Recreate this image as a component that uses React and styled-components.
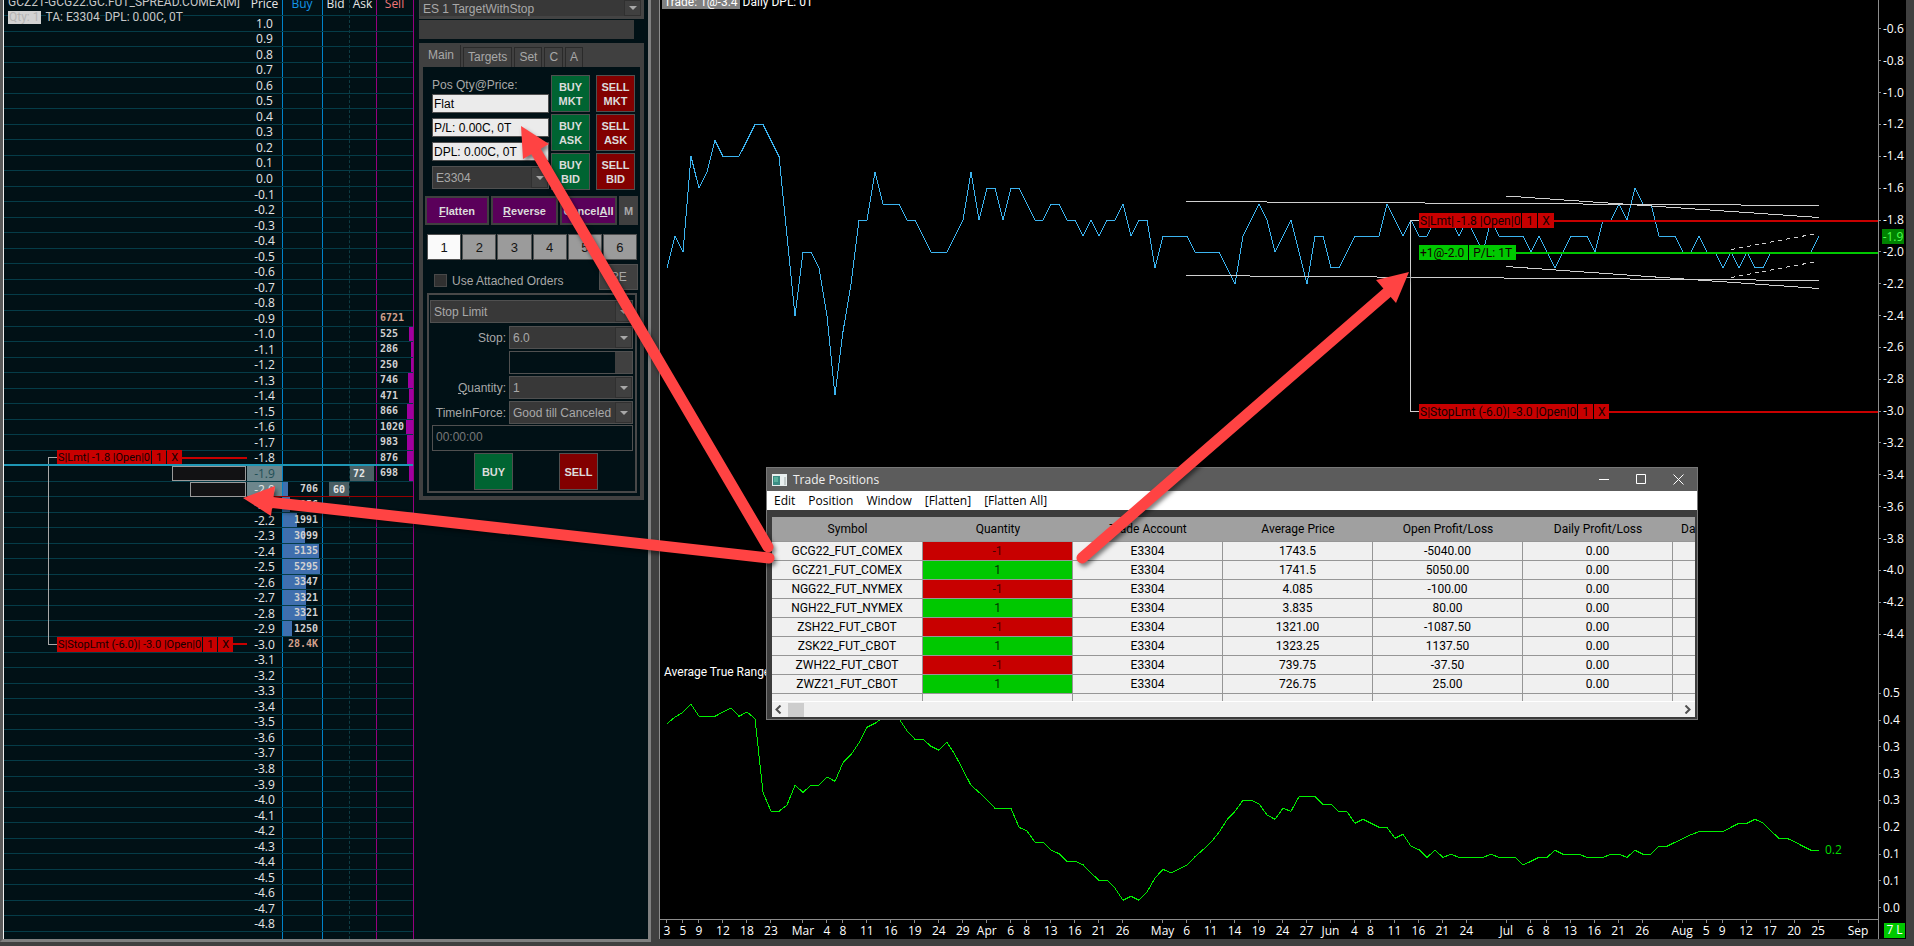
import { useState } from "react";
import styled, { createGlobalStyle, css } from "styled-components";

const GlobalStyle = createGlobalStyle`
  * {
    box-sizing: border-box;
  }
  body {
    margin: 0;
    background: #404040;
    overflow: hidden;
  }
  button, input, select {
    margin: 0;
    border-radius: 0;
    font-family: inherit;
  }
`;

const uiFont = `"Segoe UI", "Open Sans", "Noto Sans", sans-serif`;
const tightFont = `"Segoe UI", Roboto, "Liberation Sans", sans-serif`;
const formFont = `Arial, "Liberation Sans", sans-serif`;
const monoFont = `Consolas, "DejaVu Sans Mono", monospace`;

/* ---------- data ---------- */

const bidDepth = {
  "-2.0": ["706", 5],
  "-2.1": ["956", 7],
  "-2.2": ["1991", 14],
  "-2.3": ["3099", 22],
  "-2.4": ["5135", 36],
  "-2.5": ["5295", 37],
  "-2.6": ["3347", 23],
  "-2.7": ["3321", 23],
  "-2.8": ["3321", 23],
  "-2.9": ["1250", 9],
  "-3.0": ["28.4K", 0],
};

const askDepth = {
  "-0.9": ["6721", 0],
  "-1.0": ["525", 4],
  "-1.1": ["286", 2],
  "-1.2": ["250", 2],
  "-1.3": ["746", 5],
  "-1.4": ["471", 4],
  "-1.5": ["866", 6],
  "-1.6": ["1020", 7],
  "-1.7": ["983", 6],
  "-1.8": ["876", 6],
  "-1.9": ["698", 4],
};

const ladderOrders = {
  "-1.8": "S|Lmt| -1.8 |Open|0",
  "-3.0": "S|StopLmt (-6.0)| -3.0 |Open|0",
};

// from 1.0 down to -4.8
const prices = Array.from({ length: 59 }, (_, i) => ((10 - i) / 10).toFixed(1));

const positions = [
  ["GCG22_FUT_COMEX", "-1", "E3304", "1743.5", "-5040.00", "0.00"],
  ["GCZ21_FUT_COMEX", "1", "E3304", "1741.5", "5050.00", "0.00"],
  ["NGG22_FUT_NYMEX", "-1", "E3304", "4.085", "-100.00", "0.00"],
  ["NGH22_FUT_NYMEX", "1", "E3304", "3.835", "80.00", "0.00"],
  ["ZSH22_FUT_CBOT", "-1", "E3304", "1321.00", "-1087.50", "0.00"],
  ["ZSK22_FUT_CBOT", "1", "E3304", "1323.25", "1137.50", "0.00"],
  ["ZWH22_FUT_CBOT", "-1", "E3304", "739.75", "-37.50", "0.00"],
  ["ZWZ21_FUT_CBOT", "1", "E3304", "726.75", "25.00", "0.00"],
];

// spread closes in negative tenths, one per bar
const closes = [
  21, 19, 20, 14, 16, 15, 13, 14, 14, 14, 13, 12, 12, 13, 14, 19, 24, 20, 20, 21,
  24, 29, 25, 22, 18, 18, 15, 17, 17, 17, 18, 18, 19, 20, 20, 20, 19, 18, 15, 18,
  16, 16, 18, 16, 16, 17, 18, 18, 17, 17, 18, 18, 19, 18, 19, 18, 18, 17, 19, 18,
  18, 21, 19, 19, 19, 19, 20, 20, 20, 20, 21, 22, 19, 18, 17, 18, 20, 19, 18, 20,
  22, 19, 19, 21, 21, 20, 19, 19, 19, 19, 17, 18, 19, 18, 19, 19, 18, 18, 18, 19,
  18, 19, 20, 18, 19, 19, 19, 19, 20, 19, 20, 21, 20, 19, 19, 19, 20, 18, 18, 17,
  18, 16, 17, 17, 19, 19, 19, 20, 20, 19, 20, 20, 21, 20, 21, 20, 21, 21, 20, 20,
  20, 20, 20, 20, 19,
];

const atr = [
  251, 231, 217, 193, 229, 229, 229, 216, 204, 229, 216, 236, 457, 514, 514, 495,
  436, 457, 436, 436, 411, 424, 368, 344, 308, 262, 250, 232, 225, 236, 272, 298,
  298, 319, 331, 307, 344, 390, 436, 457, 480, 505, 505, 505, 562, 573, 607, 607,
  630, 641, 664, 664, 674, 699, 721, 721, 745, 781, 769, 781, 756, 714, 688, 699,
  687, 675, 650, 629, 607, 577, 539, 514, 481, 481, 491, 525, 538, 505, 514, 470,
  470, 470, 493, 493, 515, 515, 550, 538, 550, 562, 562, 595, 583, 619, 629, 652,
  631, 652, 643, 652, 652, 652, 652, 643, 652, 652, 652, 675, 664, 652, 652, 631,
  643, 643, 643, 652, 652, 652, 643, 643, 652, 631, 643, 643, 619, 619, 607, 596,
  584, 575, 575, 575, 575, 562, 550, 550, 538, 549, 573, 595, 595, 606, 619, 631,
  631,
];

const dates = [
  [0, "3"], [2, "5"], [4, "9"], [7, "12"], [10, "18"], [13, "23"], [17, "Mar"],
  [20, "4"], [22, "8"], [25, "11"], [28, "16"], [31, "19"], [34, "24"], [37, "29"],
  [40, "Apr"], [43, "6"], [45, "8"], [48, "13"], [51, "16"], [54, "21"], [57, "26"],
  [62, "May"], [65, "6"], [68, "11"], [71, "14"], [74, "19"], [77, "24"], [80, "27"],
  [83, "Jun"], [86, "4"], [88, "8"], [91, "11"], [94, "16"], [97, "21"], [100, "24"],
  [105, "Jul"], [108, "6"], [110, "8"], [113, "13"], [116, "16"], [119, "21"],
  [122, "26"], [127, "Aug"], [130, "5"], [132, "9"], [135, "12"], [138, "17"],
  [141, "20"], [144, "25"], [149, "Sep"],
];

const priceScale = Array.from({ length: 20 }, (_, i) => (-0.6 - i * 0.2).toFixed(1));
const atrScale = ["0.5", "0.4", "0.3", "0.3", "0.3", "0.2", "0.1", "0.1", "0.0"];

const closePoints = closes.map((c, i) => `${7 + i * 8},${(252 + (c - 20) * 15.93).toFixed(1)}`).join(" ");
const atrPoints = atr.map((v, i) => `${7 + i * 8},${(640 + v / 3).toFixed(1)}`).join(" ");

/* ---------- small parts ---------- */

function OrderTag({ text, position, small }) {
  const parts = position ? text : [text, "1", "X"];
  return (
    <Tag $position={position} $small={small}>
      {parts.map((part, i) => (
        <TagPart key={i}>{part}</TagPart>
      ))}
    </Tag>
  );
}

function Combo({ id, label, value, ...rest }) {
  return (
    <ComboBox {...rest}>
      <ComboSelect id={id} aria-label={label} defaultValue={value}>
        <option>{value}</option>
      </ComboSelect>
      <ComboArrow>
        <svg width="8" height="4" viewBox="0 0 8 4">
          <path d="M0 0h8L4 4z" fill="#a8a8a8" />
        </svg>
      </ComboArrow>
    </ComboBox>
  );
}

/* ---------- price ladder ---------- */

function LadderRow({ price }) {
  const buy = bidDepth[price];
  const sell = askDepth[price];
  const order = ladderOrders[price];
  return (
    <LadderLine>
      <OrderCell>
        {order && (
          <>
            <OrderTag small text={order} />
            <OrderRule />
          </>
        )}
        {price === "-1.9" && <LastTradeBox $wide />}
        {price === "-2.0" && <LastTradeBox />}
      </OrderCell>
      <PriceCell $mark={price === "-1.9" ? "last" : price === "-2.0" ? "bid" : ""}>{price}</PriceCell>
      <BuyCell>
        {buy && buy[1] > 0 && <BuyBar style={{ width: buy[1] }} />}
        {buy && <DepthText $total={price === "-3.0"}>{buy[0]}</DepthText>}
      </BuyCell>
      <BidCell>{price === "-2.0" && <BestBid>60</BestBid>}</BidCell>
      <AskCell>{price === "-1.9" && <BestAsk>72</BestAsk>}</AskCell>
      <SellCell>
        {sell && <DepthText $total={price === "-0.9"}>{sell[0]}</DepthText>}
        {sell && sell[1] > 0 && <SellBar style={{ width: sell[1] }} />}
      </SellCell>
    </LadderLine>
  );
}

function Ladder() {
  return (
    <LadderPane>
      <ColumnLines>
        <i />
        <i />
        <BlueLine />
        <BlueLine />
        <DashLine />
        <SellLine />
      </ColumnLines>
      <LadderBody>
        <LadderHead>
          <span />
          <span>Price</span>
          <HeadBuy>Buy</HeadBuy>
          <span>Bid</span>
          <span>Ask</span>
          <HeadSell>Sell</HeadSell>
        </LadderHead>
        <LadderRows>
          {prices.map((price) => (
            <LadderRow key={price} price={price} />
          ))}
        </LadderRows>
      </LadderBody>
      <LadderTitle>
        <div>GCZ21-GCG22.GC.FUT_SPREAD.COMEX[M]</div>
        <LadderInfo>
          <QtyBox>Qty: 1</QtyBox>
          <span>TA: E3304</span>
          <span>DPL: 0.00C, 0T</span>
        </LadderInfo>
      </LadderTitle>
      <LadderBracket />
      <SpreadLine />
      <BidLine />
    </LadderPane>
  );
}

/* ---------- trade panel ---------- */

function TradePanel() {
  const [qty, setQty] = useState(1);
  const [tab, setTab] = useState("Main");
  return (
    <Panel>
      <ConfigCombo label="Trade configuration" value="ES 1 TargetWithStop" />
      <StatusBox />
      <TabFrame>
        <TabStrip>
          {["Main", "Targets", "Set", "C", "A"].map((name) => (
            <TabButton key={name} $active={name === tab} onClick={() => setTab(name)}>
              {name}
            </TabButton>
          ))}
        </TabStrip>
        <TabBody>
          <TopBlock>
            <Fields>
              <FieldLabel htmlFor="pos">Pos Qty@Price:</FieldLabel>
              <ReadField id="pos" readOnly value="Flat" />
              <ReadField aria-label="Open profit/loss" readOnly value="P/L: 0.00C, 0T" />
              <ReadField aria-label="Daily profit/loss" readOnly value="DPL: 0.00C, 0T" />
              <Combo label="Account" value="E3304" />
            </Fields>
            <OrderButtons>
              {["MKT", "ASK", "BID"].map((kind) => (
                <TradeButton key={kind}>BUY<br />{kind}</TradeButton>
              ))}
            </OrderButtons>
            <OrderButtons>
              {["MKT", "ASK", "BID"].map((kind) => (
                <TradeButton key={kind} $sell>SELL<br />{kind}</TradeButton>
              ))}
            </OrderButtons>
          </TopBlock>
          <ActionRow>
            <PurpleButton><u>F</u>latten</PurpleButton>
            <PurpleButton><u>R</u>everse</PurpleButton>
            <PurpleButton>Cancel<u>A</u>ll</PurpleButton>
            <GreyButton>M</GreyButton>
          </ActionRow>
          <QtyRow>
            {[1, 2, 3, 4, 5, 6].map((n) => (
              <QtyButton key={n} $active={n === qty} onClick={() => setQty(n)}>{n}</QtyButton>
            ))}
          </QtyRow>
          <AttachRow>
            <CheckBox type="checkbox" id="attached" />
            <AttachLabel htmlFor="attached">Use Attached Orders</AttachLabel>
            <ReButton>RE</ReButton>
          </AttachRow>
          <OrderGroup>
            <Combo label="Order type" value="Stop Limit" />
            <OrderForm>
              <label htmlFor="stop">Stop:</label>
              <Combo id="stop" value="6.0" />
              <span />
              <OffsetBox><OffsetThumb /></OffsetBox>
              <label htmlFor="quantity"><u>Q</u>uantity:</label>
              <Combo id="quantity" value="1" />
              <label htmlFor="tif">TimeInForce:</label>
              <Combo id="tif" value="Good till Canceled" />
            </OrderForm>
            <TimeInput aria-label="Time" defaultValue="00:00:00" />
            <SubmitRow>
              <TradeButton>BUY</TradeButton>
              <TradeButton $sell>SELL</TradeButton>
            </SubmitRow>
          </OrderGroup>
        </TabBody>
      </TabFrame>
    </Panel>
  );
}

/* ---------- chart ---------- */

function Chart() {
  return (
    <ChartWindow>
      <PlotColumn>
        <Plot viewBox="0 0 1218 919" preserveAspectRatio="none">
          <polyline points={closePoints} stroke="#3cb4f0" />
          <polyline points={atrPoints} stroke="#00f000" />
          <g stroke="#d0d0d0">
            <path d="M526 201.5L1159 205.5M846 196L1159 217.5M526 275.5L1159 280.5M846 266.5L1159 288.5" />
            <path d="M1071 249.5L1157 233.5M1071 277.5L1157 261.5" strokeDasharray="4 4" />
            <path d="M759 220.5H750.5V411.5H759" />
          </g>
        </Plot>
        <DateAxis>
          {dates.map(([bar, text]) => (
            <DateLabel key={bar} style={{ gridColumn: bar + 1 }}>{text}</DateLabel>
          ))}
        </DateAxis>
      </PlotColumn>
      <ValueAxis>
        <Scale $grow={637}>
          {priceScale.map((v) => <ScaleLabel key={v}>{v}</ScaleLabel>)}
        </Scale>
        <AxisGap />
        <Scale $grow={241}>
          {atrScale.map((v, i) => <ScaleLabel key={i}>{v}</ScaleLabel>)}
        </Scale>
        <BarsBadge>7 L</BarsBadge>
        <LastBadge>-1.9</LastBadge>
      </ValueAxis>

      <ChartTitle>
        <span>Trade: 1@-3.4</span> Daily DPL: 0T
      </ChartTitle>
      <StudyName>Average True Range</StudyName>
      <AtrValue>0.2</AtrValue>
      <ChartOrder $top={213}>
        <OrderTag text="S|Lmt| -1.8 |Open|0" />
        <OrderRule />
      </ChartOrder>
      <ChartOrder $top={245}>
        <OrderTag position text={["+1@-2.0 ", "P/L: 1T"]} />
        <OrderRule $position />
      </ChartOrder>
      <ChartOrder $top={404}>
        <OrderTag text="S|StopLmt (-6.0)| -3.0 |Open|0" />
        <OrderRule />
      </ChartOrder>
    </ChartWindow>
  );
}

/* ---------- trade positions window ---------- */

function PositionsWindow() {
  return (
    <PosWindow>
      <TitleBar>
        <svg width="15" height="12" viewBox="0 0 15 12">
          <rect width="15" height="12" fill="#e8eeee" />
          <rect x="1" y="2" width="7" height="9" fill="#3c8c84" />
          <rect x="2" y="3" width="4" height="5" fill="#5ab09c" />
          <rect x="12" y="3" width="2" height="8" fill="#c4cccc" />
        </svg>
        <TitleText>Trade Positions</TitleText>
        <WindowButton aria-label="Minimize">
          <svg width="11" height="11" viewBox="0 0 11 11"><path d="M0 5.5h10" /></svg>
        </WindowButton>
        <WindowButton aria-label="Maximize">
          <svg width="11" height="11" viewBox="0 0 11 11"><path d="M.5 .5h9v9h-9z" /></svg>
        </WindowButton>
        <WindowButton aria-label="Close">
          <svg width="11" height="11" viewBox="0 0 11 11"><path d="M.5 .5l10 10M10.5 .5l-10 10" /></svg>
        </WindowButton>
      </TitleBar>
      <MenuBar>
        {["Edit", "Position", "Window", "[Flatten]", "[Flatten All]"].map((item) => (
          <MenuItem key={item}>{item}</MenuItem>
        ))}
      </MenuBar>
      <GridFrame>
        <PosTable>
          <thead>
            <tr>
              <th>Symbol</th>
              <th>Quantity</th>
              <th>Trade Account</th>
              <th>Average Price</th>
              <th>Open Profit/Loss</th>
              <th>Daily Profit/Loss</th>
              <LastHead>Da</LastHead>
            </tr>
          </thead>
          <tbody>
            {positions.map((row) => (
              <tr key={row[0]}>
                {row.map((cell, i) =>
                  i === 1 ? (
                    <QtyCell key={i} $short={cell === "-1"}>{cell}</QtyCell>
                  ) : (
                    <td key={i}>{cell}</td>
                  )
                )}
                <td />
              </tr>
            ))}
            <StubRow>
              <td /><td /><td /><td /><td /><td /><td />
            </StubRow>
          </tbody>
        </PosTable>
        <ScrollBar>
          <svg width="7" height="9" viewBox="0 0 7 9"><path d="M5.5 .5l-4 4 4 4" /></svg>
          <ScrollThumb />
          <svg width="7" height="9" viewBox="0 0 7 9"><path d="M1.5 .5l4 4-4 4" /></svg>
        </ScrollBar>
      </GridFrame>
    </PosWindow>
  );
}

function Arrows() {
  return (
    <ArrowLayer viewBox="0 0 1914 946" preserveAspectRatio="none">
      <g stroke="#ff4343" strokeWidth="11" strokeLinecap="round">
        <path d="M768 547L534 148" />
        <path d="M769 558L268 502" />
        <path d="M1082 558L1389 291" />
      </g>
      <g fill="#ff4343">
        <path d="M521 126L549 144L523 159z" />
        <path d="M243 498L275 486L271 516z" />
        <path d="M1409 272L1396 303L1376 280z" />
      </g>
    </ArrowLayer>
  );
}

export default function App() {
  return (
    <Desktop>
      <GlobalStyle />
      <DomWindow>
        <Ladder />
        <TradePanel />
      </DomWindow>
      <Chart />
      <PositionsWindow />
      <Arrows />
    </Desktop>
  );
}

/* ---------- styles ---------- */

const Desktop = styled.main`
  position: relative;
  display: flex;
  gap: 8px;
  height: 100vh;
  padding: 0 8px 0 0;
  background: #404040;
  font: 12px/14px ${uiFont};
  color: #e6e6e6;
  overflow: hidden;
`;

const DomWindow = styled.section`
  display: flex;
  flex: none;
  margin-bottom: 4px;
  border: 3px solid #808080;
  border-top: 0;
  border-left-color: #5a5a5a;
  background: #011116;
  overflow: hidden;
`;

const ladderColumns = css`
  display: grid;
  grid-template-columns: 243px 35px 40px 27px 27px 37px;
`;

const LadderPane = styled.div`
  position: relative;
  display: grid;
  width: 411px;
  border-left: 1px solid #f0f0f0;
  border-right: 1px solid #96007f;
`;

const ColumnLines = styled.div`
  ${ladderColumns}
  grid-area: 1 / 1;
`;
const BlueLine = styled.i`
  border-left: 1px solid #0082c8;
`;
const DashLine = styled.i`
  border-left: 1px dashed #0f3c44;
`;
const SellLine = styled.i`
  border-left: 1px solid #96007f;
`;

const LadderBody = styled.div`
  grid-area: 1 / 1;
  display: flex;
  flex-direction: column;
  padding-bottom: 7px;
  min-height: 0;
`;

const LadderHead = styled.div`
  ${ladderColumns}
  height: 16px;
  border-bottom: 1px solid #053c48;
  line-height: 8px;
  text-align: center;
`;
const HeadBuy = styled.span`
  color: #1496e6;
`;
const HeadSell = styled.span`
  color: #f07878;
`;

const LadderRows = styled.div`
  flex: 1;
  display: grid;
  grid-auto-rows: 1fr;
  min-height: 0;
`;

const LadderLine = styled.div`
  ${ladderColumns}
  min-height: 0;
  border-bottom: 1px solid #053c48;
`;

const cell = css`
  display: flex;
  align-items: center;
  min-width: 0;
  min-height: 0;
`;

const OrderCell = styled.div`
  ${cell}
  padding-left: 53px;
`;

const PriceCell = styled.div`
  ${cell}
  justify-content: center;
  padding-top: 1px;
  ${(p) => p.$mark && css`background: #6d868c;`}
  color: ${(p) => (p.$mark === "last" ? "#1f4f56" : "#e6e6e6")};
`;

const BuyCell = styled.div`
  ${cell}
  position: relative;
  justify-content: flex-end;
  padding: 0 4px 0 1px;
`;
const BuyBar = styled.div`
  position: absolute;
  left: 1px;
  top: 0;
  bottom: 0;
  background: #3f6fae;
`;
const BidCell = styled.div`
  ${cell}
  justify-content: flex-end;
`;
const AskCell = styled.div`
  ${cell}
  padding-left: 1px;
`;
const SellCell = styled.div`
  ${cell}
  align-items: stretch;
  justify-content: space-between;
  padding-left: 4px;
`;
const SellBar = styled.div`
  background: #a000a0;
`;

const DepthText = styled.span`
  position: relative;
  font: bold 10px/14px ${monoFont};
  color: ${(p) => (p.$total ? "#d2a08c" : "#d2d2d2")};
`;

const BestBid = styled.span`
  width: 20px;
  background: #4b5f64;
  font: bold 10px/15px ${monoFont};
  text-align: center;
`;
const BestAsk = styled(BestBid)`
  width: 24px;
  padding-left: 3px;
  text-align: left;
`;

const LastTradeBox = styled.div`
  width: ${(p) => (p.$wide ? 74 : 56)}px;
  height: 15px;
  margin: 0 1px 0 auto;
  border: 1px solid #9a9a9a;
  background: #121214;
`;

const LadderTitle = styled.div`
  position: absolute;
  left: 4px;
  top: -5px;
  color: #c8c8c8;
  font-family: ${tightFont};
`;
const LadderInfo = styled.div`
  display: flex;
  align-items: center;
  gap: 5px;
  margin-top: 1px;

  span {
    background: #011116;
  }
`;
const QtyBox = styled.div`
  padding: 0 1px;
  background: #d2d2d2;
  line-height: 13px;
  color: #b4b4b4;
`;

const LadderBracket = styled.div`
  position: absolute;
  left: 44px;
  top: 457px;
  width: 9px;
  height: 188px;
  border: 1px solid #a8a8a8;
  border-right: 0;
`;
const SpreadLine = styled.div`
  position: absolute;
  left: 0;
  right: 0;
  top: 464px;
  height: 2px;
  background: #1e96b4;
`;
const BidLine = styled.div`
  position: absolute;
  left: 243px;
  right: 0;
  top: 496px;
  height: 1px;
  background: #960000;
`;

const TagPart = styled.span`
  padding: 1px 1px 0;
  line-height: 14px;

  & + & {
    padding: 1px 4px 0;
  }
`;
const Tag = styled.div`
  display: flex;
  flex: none;
  gap: 1px;
  font-family: ${tightFont};
  font-size: ${(p) => (p.$small ? 11 : 12)}px;
  color: #140000;
  white-space: pre;

  > span {
    background: ${(p) => (p.$position ? "#00c800" : "#c80000")};
  }
`;
const OrderRule = styled.div`
  flex: 1;
  height: 2px;
  background: ${(p) => (p.$position ? "#00c800" : "#c80000")};
`;

const Panel = styled.div`
  width: 225px;
  margin: 0 4px 0 5px;
  font: 12px/14px ${formFont};
  color: #a8a8a8;
`;

const ComboBox = styled.div`
  display: flex;
  align-items: stretch;
  height: 23px;
  border: 1px solid #505050;
  background: #383838;
`;
const ComboSelect = styled.select`
  flex: 1;
  min-width: 0;
  padding: 1px 0 0 3px;
  appearance: none;
  border: 0;
  background: transparent;
  font-size: 12px;
  color: #a8a8a8;
  outline: 0;
`;
const ComboArrow = styled.span`
  display: flex;
  flex: none;
  align-items: center;
  justify-content: center;
  width: 17px;
  border: 1px solid #303030;
  background: #404040;
`;

const ConfigCombo = styled(Combo)`
  height: 19px;
  border-top: 0;
  border-width: 0 3px 3px 1px;
  border-color: #444;
`;

const StatusBox = styled.div`
  width: 215px;
  height: 19px;
  margin-top: 1px;
  background: #3c3c3c;
`;

const TabFrame = styled.div`
  margin-top: 4px;
  padding: 1px 4px 4px;
  background: #404040;
`;
const TabStrip = styled.div`
  display: flex;
  align-items: flex-end;
  gap: 2px;
  height: 23px;
`;
const TabButton = styled.button`
  height: ${(p) => (p.$active ? 22 : 20)}px;
  padding: ${(p) => (p.$active ? "0 6px 2px 5px" : "0 4px 2px")};
  border: 1px solid #2a2a2a;
  border-width: ${(p) => (p.$active ? "0 1px 0 0" : "1px 1px 0")};
  background: #404040;
  font-size: 12px;
  color: #a8a8a8;
`;
const TabBody = styled.div`
  padding: 8px 2px 3px;
  background: #011116;
`;

const TopBlock = styled.div`
  display: flex;
  padding-left: 7px;
`;
const Fields = styled.div`
  display: flex;
  flex-direction: column;
  gap: 5px;
  width: 117px;
`;
const FieldLabel = styled.label`
  height: 19px;
  margin-bottom: -5px;
  line-height: 20px;
`;
const ReadField = styled.input`
  width: 100%;
  height: 19px;
  padding: 1px 0 0 1px;
  border: 1px solid #505050;
  background: #ebebeb;
  font-size: 12px;
  color: #000;
`;
const OrderButtons = styled.div`
  display: flex;
  flex-direction: column;
  gap: 2px;
  margin-left: 2px;

  & + & {
    margin-left: 6px;
  }
`;

const TradeButton = styled.button`
  width: 39px;
  height: 37px;
  padding: 0;
  border: 1px solid #505050;
  background: ${(p) => (p.$sell ? "#820000" : "#006432")};
  font-size: 11px;
  font-weight: bold;
  line-height: 14px;
  color: #dcdcdc;
`;

const ActionRow = styled.div`
  display: grid;
  grid-template-columns: 64fr 67fr 57fr 19fr;
  gap: 2px;
  margin-top: 6px;
`;
const PurpleButton = styled.button`
  min-width: 0;
  height: 29px;
  padding: 0;
  border: 2px solid #404040;
  background: #5a005a;
  font-size: 11px;
  font-weight: bold;
  color: #dcdcdc;
`;
const GreyButton = styled(PurpleButton)`
  background: #404040;
  color: #a8a8a8;
`;

const QtyRow = styled.div`
  display: grid;
  grid-template-columns: repeat(6, 1fr);
  gap: 1px;
  margin: 9px 1px 0 2px;
`;
const QtyButton = styled.button`
  height: 26px;
  padding: 0;
  border: 1px solid #505050;
  background: ${(p) => (p.$active ? "#fafafa" : "#9b9b9b")};
  font-size: 13px;
  color: #141414;
`;

const AttachRow = styled.div`
  display: flex;
  align-items: center;
  gap: 5px;
  height: 26px;
  margin: 4px 0 3px;
  padding-left: 9px;
`;
const CheckBox = styled.input`
  && {
    width: 13px;
    height: 13px;
    margin-top: 7px;
    appearance: none;
    border: 1px solid #484848;
    background: #303030;
  }
`;
const AttachLabel = styled.label`
  flex: 1;
  padding-top: 8px;
  line-height: 14px;
`;
const ReButton = styled.button`
  width: 39px;
  height: 26px;
  padding: 0;
  border: 1px solid #505050;
  background: #404040;
  font-size: 12px;
  color: #a8a8a8;
`;

const OrderGroup = styled.div`
  margin: 0 1px 0 2px;
  padding: 5px 2px 1px 1px;
  border: 2px solid #484848;
`;
const OrderForm = styled.div`
  display: grid;
  grid-template-columns: 1fr 124px;
  align-items: center;
  gap: 2px 3px;
  margin: 3px 0 1px;
  text-align: right;
`;
const OffsetBox = styled.div`
  display: flex;
  justify-content: flex-end;
  height: 23px;
  border: 1px solid #505050;
  background: #011116;
`;
const OffsetThumb = styled.div`
  width: 17px;
  background: #404040;
`;
const TimeInput = styled.input`
  display: block;
  width: 201px;
  height: 26px;
  margin-left: auto;
  padding: 0 3px 3px;
  border: 1px solid #505050;
  background: #011116;
  font-size: 12px;
  color: #787878;
`;
const SubmitRow = styled.div`
  display: flex;
  justify-content: space-between;
  margin: 2px 35px 0 44px;
`;

const ChartWindow = styled.section`
  position: relative;
  display: flex;
  flex: 1;
  min-width: 0;
  margin-bottom: 7px;
  border-left: 1px solid #8c8c8c;
  background: #000;
  color: #fff;
  overflow: hidden;
`;
const PlotColumn = styled.div`
  flex: 1;
  display: flex;
  flex-direction: column;
  min-width: 0;
`;
const Plot = styled.svg`
  flex: 1;
  width: 100%;
  min-height: 0;
  fill: none;
  shape-rendering: crispEdges;
`;
const DateAxis = styled.div`
  display: grid;
  grid-template-columns: repeat(152, 1fr);
  height: 20px;
  padding-left: 3px;
  border-top: 1px solid #8c8c8c;
`;
const DateLabel = styled.span`
  display: flex;
  flex-direction: column;
  align-items: center;
  min-width: 0;
  line-height: 16px;

  &::before {
    content: "";
    flex: none;
    width: 1px;
    height: 3px;
    background: #8c8c8c;
  }
`;
const ValueAxis = styled.div`
  position: relative;
  display: flex;
  flex-direction: column;
  width: 28px;
  padding-top: 13px;
  border-left: 1px solid #8c8c8c;
`;
const Scale = styled.div`
  flex: ${(p) => p.$grow} 1 0;
  display: grid;
  grid-auto-rows: 1fr;
`;
const AxisGap = styled.div`
  flex: 30 1 0;
`;
const ScaleLabel = styled.span`
  display: flex;
  align-items: center;
  gap: 2px;

  &::before {
    content: "";
    width: 2px;
    height: 1px;
    background: #8c8c8c;
  }
`;
const BarsBadge = styled.span`
  width: 21px;
  height: 15px;
  margin: 2px 0 1px 5px;
  background: #00c800;
  text-align: center;
`;
const LastBadge = styled.span`
  position: absolute;
  left: 3px;
  top: 229px;
  width: 22px;
  background: #008200;
  line-height: 15px;
  text-align: center;
  color: #50ff50;
`;

const ChartTitle = styled.div`
  position: absolute;
  left: 2px;
  top: -5px;
  font-family: ${tightFont};

  span {
    padding: 0 2px;
    background: #808080;
  }
`;
const StudyName = styled.div`
  position: absolute;
  left: 4px;
  top: 665px;
  font-family: ${tightFont};
`;
const AtrValue = styled.div`
  position: absolute;
  left: 1165px;
  top: 843px;
  color: #00dc00;
`;
const ChartOrder = styled.div`
  position: absolute;
  left: 759px;
  right: 28px;
  top: ${(p) => p.$top}px;
  display: flex;
  align-items: center;
`;

const PosWindow = styled.section`
  position: absolute;
  left: 766px;
  top: 467px;
  width: 932px;
  border: 1px solid #787878;
  background: #3c3c3c;
  color: #000;
`;
const TitleBar = styled.header`
  display: flex;
  align-items: center;
  height: 23px;
  padding-left: 5px;
  background: #5c5c5c;
`;
const TitleText = styled.h1`
  flex: 1;
  margin: 0 0 0 6px;
  font: inherit;
  color: #f0f0f0;
`;
const WindowButton = styled.button`
  display: flex;
  align-items: center;
  justify-content: center;
  width: 37px;
  height: 22px;
  padding: 0;
  border: 0;
  background: none;

  svg {
    fill: none;
    stroke: #fff;
  }
`;
const MenuBar = styled.nav`
  display: flex;
  gap: 13px;
  height: 19px;
  padding-left: 7px;
  background: #fff;
`;
const MenuItem = styled.button`
  padding: 0;
  border: 0;
  background: none;
  font-size: 12px;
  line-height: 18px;
  color: #000;
`;

const GridFrame = styled.div`
  margin: 7px 2px 2px 5px;
  background: #f0f0f0;
`;
const PosTable = styled.table`
  width: 100%;
  table-layout: fixed;
  border-collapse: separate;
  border-spacing: 0;
  font-family: ${tightFont};
  text-align: center;

  th {
    width: 150px;
    height: 25px;
    padding: 0;
    border-bottom: 1px solid #969696;
    background: #a0a0a0;
    font-weight: normal;
  }
  th:first-child {
    width: 151px;
  }
  td {
    height: 19px;
    padding: 0 0 1px;
    border-right: 1px solid #969696;
    border-bottom: 1px solid #969696;
    line-height: 14px;
  }
  td:last-child {
    border-right: 0;
  }
`;
const LastHead = styled.th`
  && {
    width: auto;
    padding-left: 8px;
    text-align: left;
  }
`;
const QtyCell = styled.td`
  background: ${(p) => (p.$short ? "#c80000" : "#00c800")};
  color: ${(p) => (p.$short ? "#460000" : "#003200")};
`;
const StubRow = styled.tr`
  && td {
    height: 7px;
    padding: 0;
    border-bottom: 0;
    line-height: 0;
  }
`;
const ScrollBar = styled.div`
  display: flex;
  align-items: center;
  gap: 6px;
  height: 16px;
  padding: 0 4px 0 3px;
  border-top: 1px solid #fff;

  svg {
    fill: none;
    stroke: #505050;
    stroke-width: 2;
  }
`;
const ScrollThumb = styled.div`
  width: 16px;
  height: 14px;
  margin-right: auto;
  background: #cdcdcd;
`;

const ArrowLayer = styled.svg`
  position: absolute;
  inset: 0;
  width: 100%;
  height: 100%;
  filter: drop-shadow(2px 3px 2px rgba(0, 0, 0, 0.5));
  pointer-events: none;
`;
